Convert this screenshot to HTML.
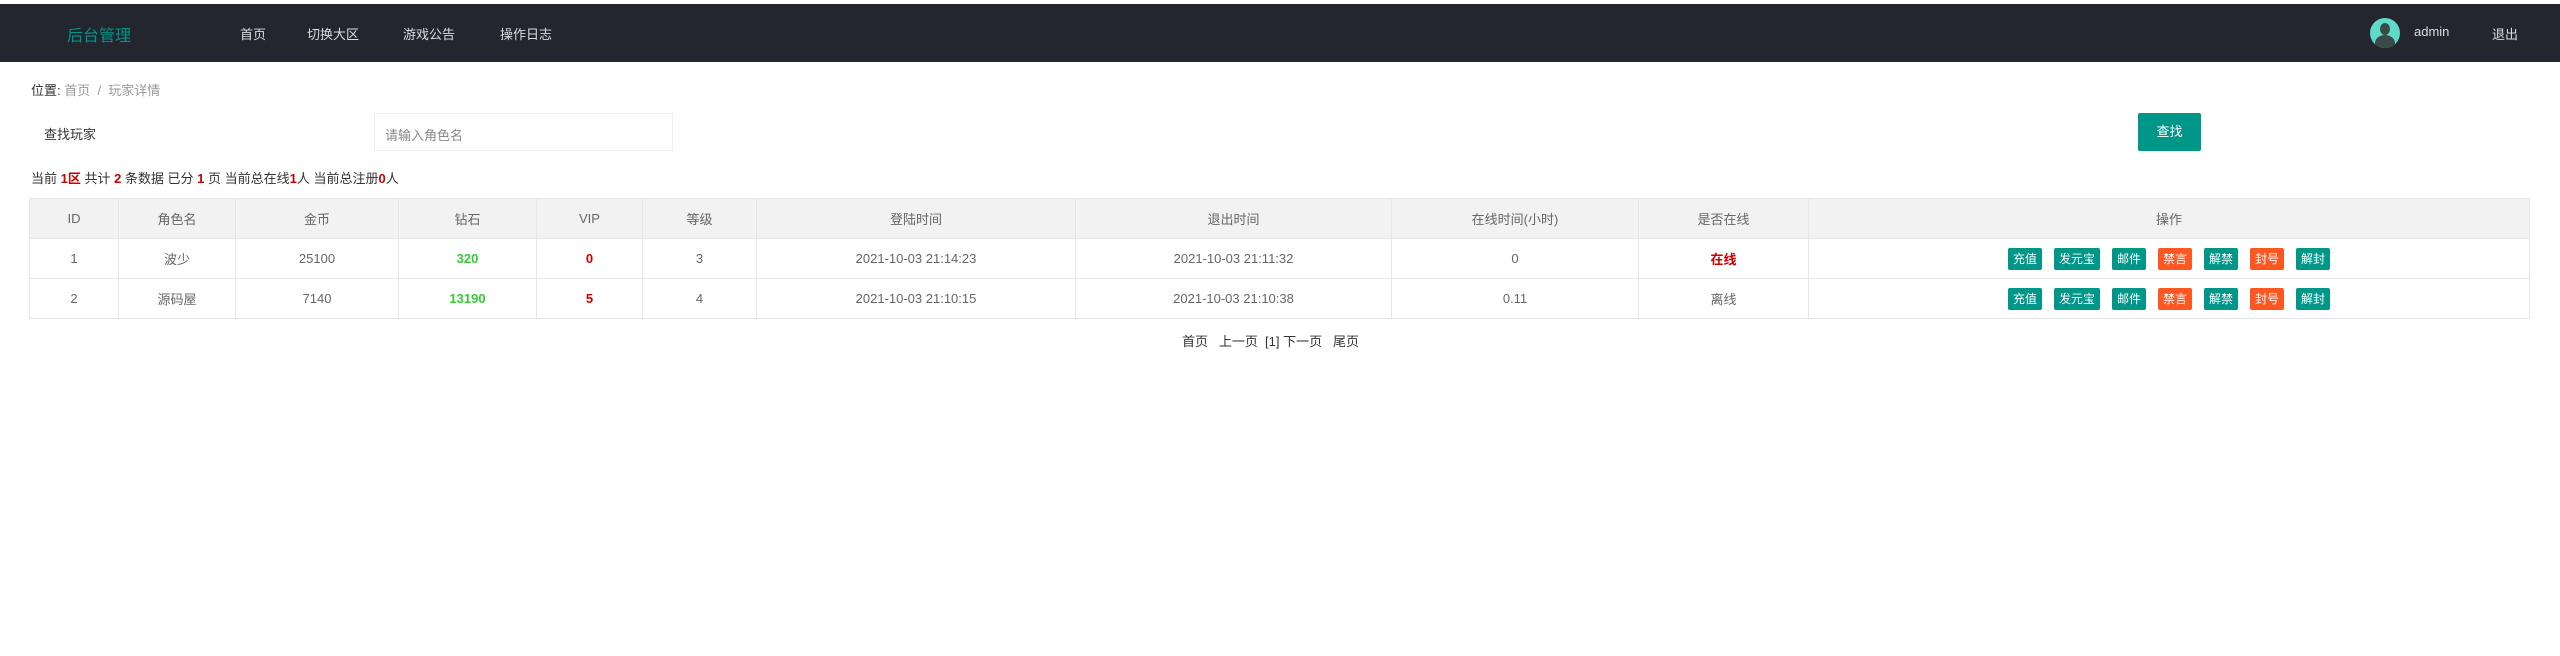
<!DOCTYPE html>
<html><head><meta charset="utf-8"><style>
*{margin:0;padding:0;box-sizing:border-box}
body{width:2560px;height:656px;background:#fff;font-family:"Liberation Sans","Noto Sans CJK SC",sans-serif;font-size:13px;color:#333;position:relative;overflow:hidden}
.hd{position:absolute;left:0;top:4px;width:2560px;height:58px;background:#23262e}
.abs{position:absolute;white-space:nowrap}
.nav{color:#ddd;font-size:13px;top:24px}
.logo{left:67px;top:22px;color:#009688;font-size:16px}
.av{left:2370px;top:18px;width:30px;height:30px;border-radius:50%;background:#5fd9c9;overflow:hidden}
.av:before{content:"";position:absolute;left:10px;top:5px;width:10px;height:12px;border-radius:50%;background:#3a4a48}
.av:after{content:"";position:absolute;left:5px;top:17px;width:20px;height:16px;border-radius:50% 50% 0 0;background:#3a4a48}
.red{color:#c00;font-weight:bold}
table{position:absolute;left:29px;top:198px;width:2501px;border-collapse:collapse;table-layout:fixed}
td,th{border:1px solid #e6e6e6;height:40px;text-align:center;color:#666;font-weight:normal;font-size:13px}
th{background:#f2f2f2}
.g{color:#3c3;font-weight:bold}
.b{display:inline-block;height:22px;line-height:22px;padding:0 5px;font-size:12px;color:#fff;background:#009688;border-radius:2px;margin:0 6px}
.o{background:#ff5722}
</style></head><body>
<div class="hd"></div>
<div class="abs logo">后台管理</div>
<div class="abs nav" style="left:240px">首页</div>
<div class="abs nav" style="left:307px">切换大区</div>
<div class="abs nav" style="left:403px">游戏公告</div>
<div class="abs nav" style="left:500px">操作日志</div>
<div class="abs av"></div>
<div class="abs nav" style="left:2414px">admin</div>
<div class="abs nav" style="left:2492px">退出</div>
<div class="abs" style="left:31px;top:80px;font-size:13px">位置: <span style="color:#999">首页 &nbsp;/&nbsp; 玩家详情</span></div>
<div class="abs" style="left:44px;top:124px">查找玩家</div>
<div class="abs" style="left:374px;top:113px;width:299px;height:38px;border:1px solid #eee;padding:11px 10px;color:#888;font-size:13px">请输入角色名</div>
<div class="abs" style="left:2138px;top:113px;width:63px;height:38px;background:#009688;border-radius:2px;color:#fff;text-align:center;line-height:38px;font-size:13px">查找</div>
<div class="abs" style="left:31px;top:168px;font-size:13px">当前 <span class="red">1区</span> 共计 <span class="red">2</span> 条数据 已分 <span class="red">1</span> 页 当前总在线<span class="red">1</span>人 当前总注册<span class="red">0</span>人</div>
<table>
<colgroup><col style="width:89px"><col style="width:117px"><col style="width:163px"><col style="width:138px"><col style="width:106px"><col style="width:114px"><col style="width:319px"><col style="width:316px"><col style="width:247px"><col style="width:170px"><col></colgroup>
<tr><th>ID</th><th>角色名</th><th>金币</th><th>钻石</th><th>VIP</th><th>等级</th><th>登陆时间</th><th>退出时间</th><th>在线时间(小时)</th><th>是否在线</th><th>操作</th></tr>
<tr><td>1</td><td>波少</td><td>25100</td><td class="g">320</td><td class="red">0</td><td>3</td><td>2021-10-03 21:14:23</td><td>2021-10-03 21:11:32</td><td>0</td><td class="red">在线</td><td><span class="b">充值</span><span class="b">发元宝</span><span class="b">邮件</span><span class="b o">禁言</span><span class="b">解禁</span><span class="b o">封号</span><span class="b">解封</span></td></tr>
<tr><td>2</td><td>源码屋</td><td>7140</td><td class="g">13190</td><td class="red">5</td><td>4</td><td>2021-10-03 21:10:15</td><td>2021-10-03 21:10:38</td><td>0.11</td><td>离线</td><td><span class="b">充值</span><span class="b">发元宝</span><span class="b">邮件</span><span class="b o">禁言</span><span class="b">解禁</span><span class="b o">封号</span><span class="b">解封</span></td></tr>
</table>
<div class="abs" style="left:1182px;top:331px;font-size:13px;color:#333">首页 &nbsp; 上一页 &nbsp;[1] 下一页 &nbsp; 尾页</div>
</body></html>
